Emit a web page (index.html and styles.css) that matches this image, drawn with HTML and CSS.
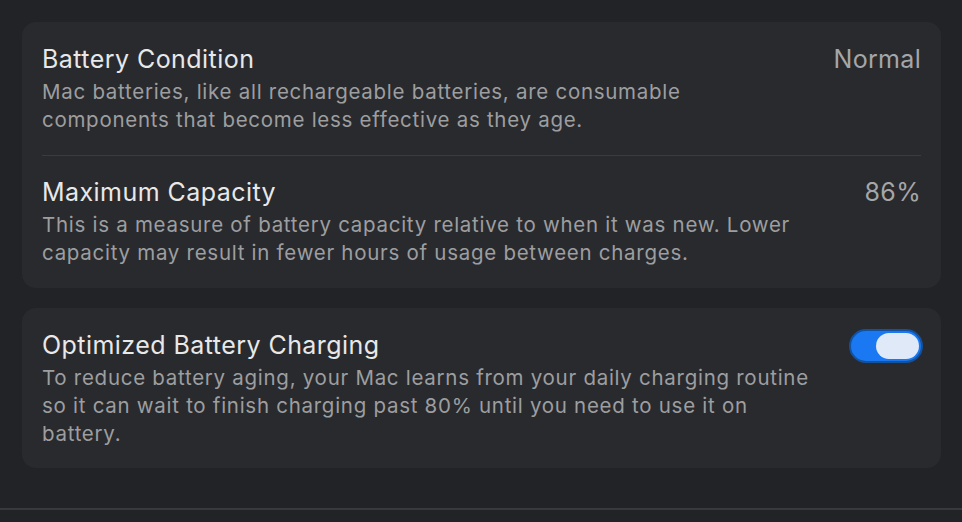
FILE: index.html
```html
<!DOCTYPE html>
<html lang="en">
<head>
<meta charset="utf-8">
<title>Battery</title>
<link rel="stylesheet" href="styles.css">
</head>
<body>
<div class="page">
  <section class="card">
    <div class="row">
      <div class="text">
        <div class="title">Battery Condition</div>
        <div class="desc">Mac batteries, like all rechargeable batteries, are consumable<br>components that become less effective as they age.</div>
      </div>
      <div class="value">Normal</div>
    </div>
    <div class="sep"></div>
    <div class="row row2">
      <div class="text">
        <div class="title">Maximum Capacity</div>
        <div class="desc">This is a measure of battery capacity relative to when it was new. Lower<br>capacity may result in fewer hours of usage between charges.</div>
      </div>
      <div class="value">86%</div>
    </div>
  </section>
  <section class="card card2">
    <div class="row row3">
      <div class="text">
        <div class="title">Optimized Battery Charging</div>
        <div class="desc">To reduce battery aging, your Mac learns from your daily charging routine<br>so it can wait to finish charging past 80% until you need to use it on<br>battery.</div>
      </div>
      <div class="toggle"><div class="knob"></div></div>
    </div>
  </section>
</div>
<div class="footer-line"></div>
</body>
</html>
```
FILE: styles.css
```css
html, body {
  margin: 0;
  padding: 0;
  background: #222326;
  font-family: Inter, "Noto Sans", sans-serif;
  -webkit-font-smoothing: antialiased;
}
.page {
  padding: 22px 21px 0 22px;
  display: flex;
  flex-direction: column;
  gap: 20px;
}
.card {
  background: #292a2d;
  border-radius: 14px;
  padding: 0 20px;
}
.row {
  display: flex;
  justify-content: space-between;
  align-items: flex-start;
  padding: 22px 0 21px;
}
.row2 {
  padding: 21px 0 21px;
}
.row3 {
  padding: 22px 0 20px;
}
.title {
  color: #e8e8e9;
  font-size: 25px;
  line-height: 30px;
  letter-spacing: 0.45px;
  margin-bottom: 4px;
}
.desc {
  color: #9d9ea0;
  font-size: 20.5px;
  line-height: 28px;
  letter-spacing: 0.72px;
  white-space: nowrap;
}
.value {
  color: #a5a6a8;
  font-size: 25px;
  line-height: 30px;
  letter-spacing: 0.3px;
}
.sep {
  height: 1px;
  background: #3a3b3e;
}
.toggle {
  width: 66px;
  height: 30px;
  margin-top: -1px;
  border-radius: 17px;
  background: #1a78f2;
  border: 2px solid #12529f;
  display: flex;
  align-items: center;
  justify-content: flex-end;
  padding: 0 2px;
  box-sizing: content-box;
  margin-right: -2px;
}
.knob {
  width: 43px;
  height: 26px;
  border-radius: 13px;
  background: #dfe9f8;
}
.footer-line {
  margin-top: 40px;
  height: 2px;
  background: #38393c;
}
```
